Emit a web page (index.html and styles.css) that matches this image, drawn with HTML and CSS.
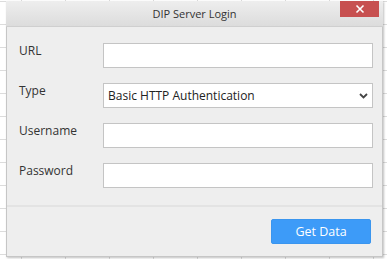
FILE: index.html
```html
<!DOCTYPE html>
<html>
<head>
<meta charset="utf-8">
<link rel="stylesheet" href="styles.css">
</head>
<body>
<div class="window">
  <div class="titlebar">
    <span class="title">DIP Server Login</span>
    <button class="close" aria-label="Close">
      <svg width="10" height="10" viewBox="0 0 10 10"><path d="M1.5 1.5 L8.5 8.5 M8.5 1.5 L1.5 8.5" stroke="#fff" stroke-width="1.6"/></svg>
    </button>
  </div>
  <div class="content">
    <div class="form">
      <label class="label">URL</label>
      <div class="field"></div>
      <label class="label">Type</label>
      <div class="field select">
        <span>Basic HTTP Authentication</span>
        <svg width="9" height="6" viewBox="0 0 9 6"><path d="M1 1 L4.5 4.5 L8 1" fill="none" stroke="#444" stroke-width="1.8"/></svg>
      </div>
      <label class="label">Username</label>
      <div class="field"></div>
      <label class="label">Password</label>
      <div class="field"></div>
    </div>
    <div class="footer">
      <button class="primary">Get Data</button>
    </div>
  </div>
</div>
</body>
</html>
```
FILE: styles.css
```css
html, body {
  margin: 0;
  padding: 0;
}
body {
  width: 387px;
  height: 259px;
  overflow: hidden;
  background-color: #fff;
  background-image:
    linear-gradient(to right, #dcdcdc 1px, transparent 1px),
    linear-gradient(to bottom, #dcdcdc 1px, transparent 1px);
  background-size: 44px 23px;
  background-position: 21px 1px;
  font-family: "Open Sans", "Noto Sans", sans-serif;
  color: #333;
  padding-top: 1px;
  padding-left: 6px;
  box-sizing: border-box;
}
.window {
  width: 377px;
  height: 256px;
  background: #eeeeee;
  border: 1px solid #c6c6c6;
  border-top: none;
  box-sizing: border-box;
  box-shadow: 1px 1px 2px rgba(0,0,0,0.25);
  display: flex;
  flex-direction: column;
}
.titlebar {
  height: 25px;
  background: linear-gradient(#eeeeee, #dcdcdc);
  border-bottom: 1px solid #cfcfcf;
  display: flex;
  align-items: center;
  justify-content: center;
  position: relative;
  margin: 0 -1px;
}
.title {
  font-size: 11px;
  color: #333;
}
.close {
  position: absolute;
  right: 4px;
  top: 0;
  width: 39px;
  height: 16px;
  background: #c75050;
  border: none;
  padding: 0;
  display: flex;
  align-items: center;
  justify-content: center;
}
.content {
  flex: 1;
  display: flex;
  flex-direction: column;
}
.form {
  display: grid;
  grid-template-columns: 84px 270px;
  grid-auto-rows: 24px;
  row-gap: 16px;
  padding: 16px 0 0 12px;
  height: 180px;
  box-sizing: border-box;
  border-bottom: 2px solid #e3e3e3;
}
.label {
  font-size: 12px;
  color: #333;
  line-height: 14px;
  padding-top: 1px;
}
.field {
  background: #fff;
  border: 1px solid #c4c4c4;
  box-sizing: border-box;
  height: 25px;
}
.select {
  display: flex;
  align-items: center;
  justify-content: space-between;
  padding: 0 4px 0 4px;
  font-size: 12px;
  color: #222;
}
.footer {
  display: flex;
  justify-content: flex-end;
  padding: 12px 11px 0 0;
}
.primary {
  width: 100px;
  height: 25px;
  background: #3d9bf8;
  border: 1px solid #3a95ee;
  border-radius: 2px;
  color: #fff;
  font-family: "Open Sans", "Noto Sans", sans-serif;
  font-size: 12.5px;
  padding: 0;
}
```
